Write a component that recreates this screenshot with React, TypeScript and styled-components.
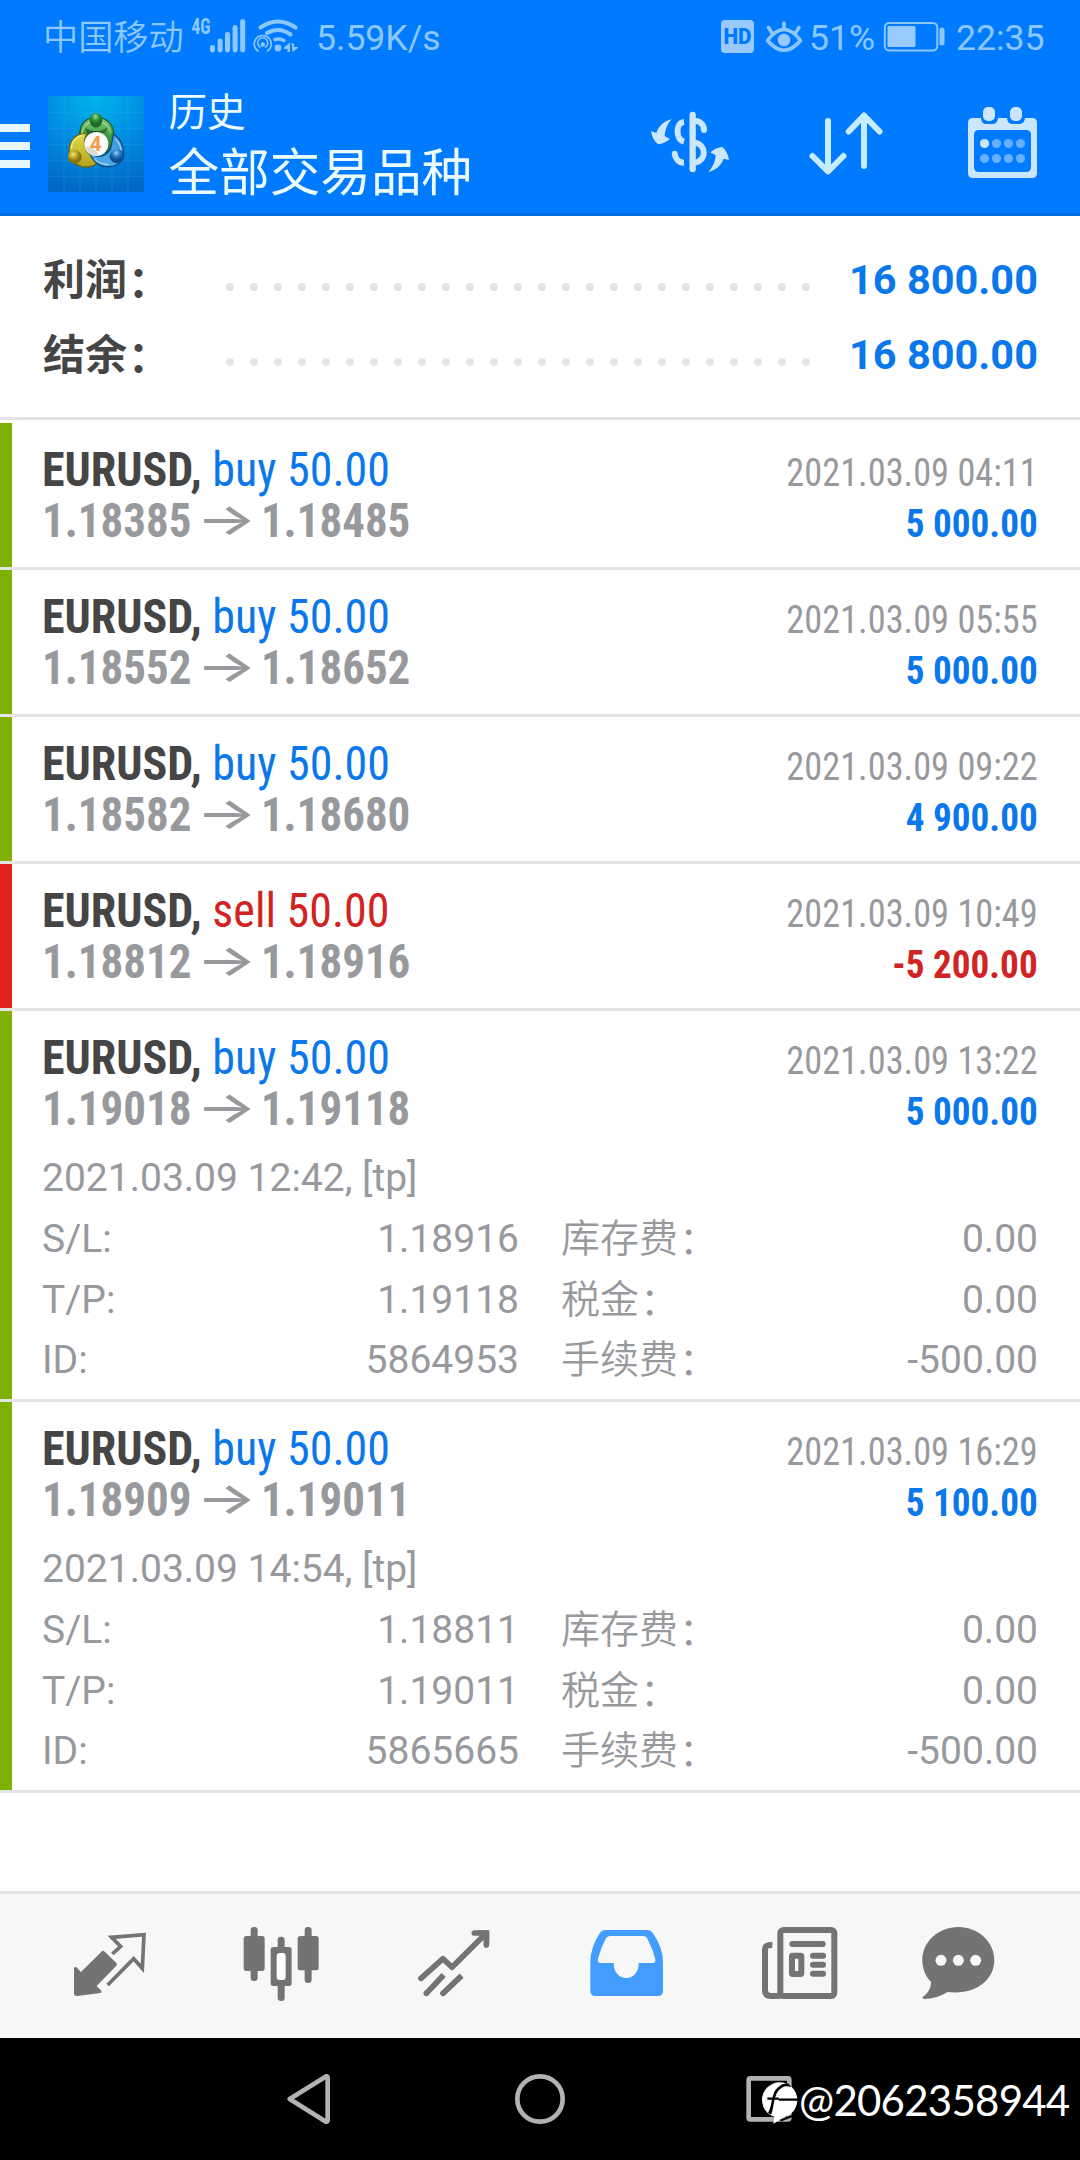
import React from "react";
import styled, { createGlobalStyle } from "styled-components";

const BLUE = "#0a78eb";
const RED = "#d22323";
const GREY = "#98999d";
const sans = `Roboto, "Noto Sans CJK SC", sans-serif`;
const condensed = `"Roboto Condensed", Roboto, "Noto Sans CJK SC", sans-serif`;

const GlobalStyle = createGlobalStyle`
  * { box-sizing: border-box; }
  body { margin: 0; background: #fff; font-family: ${sans}; }
  svg { display: block; flex: none; }
`;

const Screen = styled.div`
  width: 1080px;
  height: 2160px;
  display: flex;
  flex-direction: column;
  overflow: hidden;
  white-space: nowrap;
  background: #fff;
`;

const Header = styled.header`
  height: 216px;
  background: #007aff;
  border-bottom: 3px solid #006ce0;
`;

const StatusBar = styled.div`
  height: 74px;
  padding: 0 36px 0 43px;
  display: flex;
  justify-content: space-between;
  color: #8cc8ff;
  font-size: 35.6px;
  line-height: 76px;
`;

const StatusGroup = styled.div`
  display: flex;
  align-items: flex-start;
`;

const Carrier = styled.span`
  font: 350 35.2px/76px ${sans};
  width: 147px;
`;

const Speed = styled.span`
  margin-left: 16px;
`;

const Battery = styled.span`
  width: 70px;
  text-indent: -1px;
`;

const Clock = styled.span`
  width: 88px;
`;

const AppBar = styled.div`
  height: 139px;
  display: flex;
  align-items: flex-start;
  color: #ecfbff;
`;

const MenuButton = styled.div`
  width: 30px;
  margin: 50px 18px 0 0;
  display: flex;
  flex-direction: column;
  gap: 10px;
`;

const MenuLine = styled.i`
  height: 8px;
  background: #e8f7ff;
`;

const LogoBox = styled.div`
  margin-top: 22px;
`;

const Titles = styled.div`
  flex: 1;
  margin-left: 24.5px;
  font-family: ${sans};
  font-weight: 400;
`;

const Title = styled.div`
  font-size: 38.6px;
  line-height: 58px;
  padding-top: 10px;
`;

const Subtitle = styled.div`
  font-size: 50.6px;
  line-height: 64px;
`;

const Summary = styled.section`
  height: 204px;
  padding: 27px 42px 0;
  border-bottom: 3px solid #e4e4e4;
`;

const SummaryLine = styled.div`
  height: 75px;
  display: flex;
  justify-content: space-between;
  font-size: 42px;
  font-weight: 700;
  line-height: 75px;
`;

const SummaryLabel = styled.span`
  width: 184px;
  padding-left: 1px;
  color: #454545;
`;

const Colon = styled.span`
  display: inline-block;
  margin-left: 1px;
  transform: translateY(2px);
`;

const Dots = styled.div`
  width: 584px;
  display: flex;
  gap: 16px;
  padding-top: 40px;
`;

const Dot = styled.i`
  width: 8px;
  height: 8px;
  border-radius: 50%;
  background: #e4e4e4;
`;

const SummaryValue = styled.span`
  flex: 1;
  font-size: 41.5px;
  line-height: 73px;
  text-align: right;
  color: ${BLUE};
`;

const History = styled.main`
  flex: 1;
  padding-top: 3px;
`;

const Deal = styled.article<{ $bar: string; $tall?: boolean }>`
  height: ${(p) => (p.$tall ? 391 : 147)}px;
  padding: 21px 42px 0;
  border-bottom: 3px solid #e4e4e4;
  box-shadow: inset 12px 0 ${(p) => p.$bar};
`;

const DealHead = styled.div`
  display: flex;
  justify-content: space-between;
  height: 102px;
  font-family: ${condensed};
  line-height: 51px;
`;

const DealMain = styled.div`
  font-size: 48px;
`;

const DealSide = styled.div`
  padding-top: 4px;
  font-size: 39px;
  text-align: right;
`;

const DealTitle = styled.div`
  transform: scaleX(0.958);
  transform-origin: left;
`;

const Symbol = styled.b`
  color: #454545;
`;

const Side = styled.span<{ $sell?: boolean }>`
  color: ${(p) => (p.$sell ? RED : BLUE)};
`;

const Prices = styled.div`
  color: ${GREY};
  font-weight: 700;
  transform: scaleX(0.937);
  transform-origin: left;
`;

const Arrow = styled.span`
  display: inline-block;
  height: 51px;
  margin: 0 5px;
  vertical-align: top;
  font: 500 44px/48px Inter, sans-serif;
  transform: scaleX(1.54);
`;

const CloseTime = styled.div`
  color: ${GREY};
  transform: scaleX(0.932);
  transform-origin: right;
`;

const Profit = styled.div<{ $loss?: boolean }>`
  color: ${(p) => (p.$loss ? RED : BLUE)};
  font-weight: 700;
  transform: scaleX(0.952);
  transform-origin: right;
`;

const Details = styled.div`
  margin-top: 14px;
  display: grid;
  grid-template-columns: 477px 477px;
  column-gap: 42px;
  color: ${GREY};
  font-size: 39px;
  line-height: 60.8px;
`;

const Comment = styled.div`
  grid-column: 1 / -1;
`;

const Field = styled.div`
  display: flex;
  justify-content: space-between;
`;

const FieldLabel = styled.span`
  font-weight: 400;
`;

const CjkLabel = styled(FieldLabel)`
  font-weight: 350;
`;

const TabBar = styled.nav`
  height: 147px;
  padding-left: 24px;
  display: flex;
  background: #f7f7f7;
  border-top: 3px solid #e4e4e4;
`;

const SystemNav = styled.footer`
  position: relative;
  height: 122px;
  padding-left: 195px;
  display: flex;
  background: #000;
`;

const Watermark = styled.div`
  position: absolute;
  left: 762px;
  top: 32px;
  display: flex;
  color: #fff;
  font: 400 42px/60px Lato, sans-serif;
  letter-spacing: -0.75px;
`;

const SignalIcon = () => (
  <svg width="110" height="74" viewBox="190 0 110 74" fill="#8cc8ff">
    <rect x="210" y="45" width="5" height="7.5" rx="2.4" />
    <rect x="217.6" y="38.5" width="5" height="14" rx="2.4" />
    <rect x="225" y="32" width="5" height="20.5" rx="2.4" />
    <rect x="232.6" y="25" width="5" height="27.5" rx="2.4" />
    <rect x="240.2" y="19" width="5" height="33.5" rx="2.4" />
    <text x="191.5" y="34" fontSize="21.5" fontWeight="700" fontFamily="Roboto Condensed, Roboto" textLength="19" lengthAdjust="spacingAndGlyphs">4G</text>
    <g fill="none" stroke="#8cc8ff" strokeLinecap="round">
      <path d="M260.500 27.500 Q278 15.500 295.500 27.500" strokeWidth="4" />
      <path d="M267 33 Q279 26.500 290.500 34.500" strokeWidth="4" />
      <path d="M275 39.500 Q279.500 38 284 40.500" strokeWidth="3.500" />
      <path d="M258 51 A8.500 8.500 0 1 1 267.500 51 M260 47 A5 5 0 1 1 265.500 47" strokeWidth="1.600" />
    </g>
    <circle cx="262.800" cy="44.500" r="2.200" />
    <circle cx="278" cy="48" r="3.400" />
    <path d="M290 42.500 V52 H287.500 V49 H284 V47.500 Z M291.500 43 L294 44 V47 H298 V48 L292.500 52 Z" />
  </svg>
);

const HdEyeIcon = () => (
  <svg width="90" height="74" viewBox="720 0 90 74">
    <rect x="721" y="20" width="33" height="33" rx="4" fill="#99caff" />
    <text x="723.500" y="44" fontSize="21.500" fontWeight="900" fontFamily="Roboto" fill="#007aff" textLength="28" lengthAdjust="spacingAndGlyphs">HD</text>
    <g fill="none" stroke="#8cc8ff" strokeWidth="3.600" strokeLinecap="round">
      <path d="M767.500 40.500 Q784 18.500 800.500 40.500 Q784 60 767.500 40.500 Z" strokeLinejoin="round" />
      <path d="M784 23 V29 M768.500 27.500 L772 33 M799 27.500 L795.500 33" />
    </g>
    <circle cx="784" cy="40" r="6.300" fill="#99caff" />
  </svg>
);

const BatteryIcon = () => (
  <svg width="76" height="74" viewBox="880 0 76 74">
    <rect x="884.800" y="23" width="52.500" height="27.500" rx="4.500" fill="none" stroke="#8cc8ff" strokeWidth="2" />
    <rect x="887.500" y="26" width="28" height="21" rx="1.500" fill="#99caff" />
    <rect x="939.500" y="27.500" width="5" height="18" rx="2.500" fill="#8cc8ff" />
  </svg>
);

const AppLogo = () => (
  <svg width="96" height="96" viewBox="24 18 288 288">
    <defs>
      <radialGradient id="lgBg" cx=".5" cy="0" r="1">
        <stop offset="0" stopColor="#00b4ee" /><stop offset=".55" stopColor="#008be0" /><stop offset="1" stopColor="#0069c4" />
      </radialGradient>
      <linearGradient id="lgGreen" x1="0" y1="0" x2="0" y2="1"><stop offset="0" stopColor="#8fcf80" /><stop offset=".5" stopColor="#3f9c42" /><stop offset="1" stopColor="#247a30" /></linearGradient>
      <linearGradient id="lgYellow" x1="0" y1="0" x2="0" y2="1"><stop offset="0" stopColor="#e3dc46" /><stop offset="1" stopColor="#b3a020" /></linearGradient>
      <linearGradient id="lgBlue" x1="0" y1="0" x2="0" y2="1"><stop offset="0" stopColor="#3a98dc" /><stop offset="1" stopColor="#4ea9e8" /></linearGradient>
      <radialGradient id="hdGreen" cx=".45" cy=".25"><stop offset="0" stopColor="#a7d89b" /><stop offset=".5" stopColor="#3b9a3d" /><stop offset="1" stopColor="#1d6b28" /></radialGradient>
      <radialGradient id="hdYellow" cx=".4" cy=".3"><stop offset="0" stopColor="#f0e68a" /><stop offset=".5" stopColor="#c0ae2b" /><stop offset="1" stopColor="#857510" /></radialGradient>
      <radialGradient id="hdBlue" cx=".45" cy=".25"><stop offset="0" stopColor="#9fd2f5" /><stop offset=".5" stopColor="#2a7fc8" /><stop offset="1" stopColor="#0b4f94" /></radialGradient>
    </defs>
    <rect x="24" y="18" width="288" height="288" fill="url(#lgBg)" />
    <path d="M72 18V306M120 18V306M168 18V306M216 18V306M264 18V306M24 68H312M24 116H312M24 164H312M24 212H312M24 260H312" stroke="#3fb4f0" strokeOpacity=".22" strokeWidth="3" />
    <g strokeLinejoin="round" strokeWidth="4">
      <path d="M119 136 C119 100 140 82 168 82 C202 82 223 106 221 138 C220 164 208 178 196 188 L190 146 C184 120 150 118 138 140 Z" fill="url(#lgGreen)" stroke="#1f5c28" />
      <path d="M88 196 C82 154 106 128 142 130 C128 146 132 178 148 192 C164 200 176 196 178 210 C170 226 148 234 126 230 C108 226 94 214 88 196 Z" fill="url(#lgYellow)" stroke="#6e6612" />
      <path d="M220 132 C242 146 252 168 250 196 C246 222 222 232 196 230 C172 226 154 208 150 190 C172 206 198 200 212 176 Z" fill="url(#lgBlue)" stroke="#0f4c88" />
      <path d="M126 132 C128 108 146 94 168 94 C192 94 208 108 211 130" fill="none" stroke="#b7e3ac" strokeOpacity=".7" />
      <path d="M94 176 C94 156 108 140 128 136" fill="none" stroke="#f7f3a0" strokeOpacity=".8" />
      <path d="M226 146 C238 158 243 168 243 180 M164 208 C176 220 190 224 206 223" fill="none" stroke="#b4dcf7" strokeOpacity=".8" />
    </g>
    <path d="M133 112 Q168 136 203 112 L196 128 H140 Z" fill="#143f1c" opacity=".55" />
    <ellipse cx="168" cy="91" rx="19" ry="22" fill="url(#hdGreen)" />
    <ellipse cx="104" cy="201" rx="21" ry="20" fill="url(#hdYellow)" />
    <ellipse cx="231" cy="199" rx="22" ry="21" fill="url(#hdBlue)" />
    <circle cx="169" cy="162" r="36" fill="#fafafa" />
    <path d="M135 170 Q160 166 176 197 Q146 200 135 170Z" fill="#d9dadb" />
    <text x="167" y="182" textAnchor="middle" fontFamily="Roboto" fontSize="62" fontWeight="700" fill="#f79a4b">4</text>
  </svg>
);

const HeaderIcons = () => (
  <svg width="440" height="139" viewBox="640 74 440 139" fill="none" stroke="#cbe6ff" strokeLinecap="round" strokeLinejoin="round">
    <g transform="translate(640 100) scale(.33333)">
      <path d="M158 45 V207" strokeWidth="19" />
      <path d="M132 66 C106 68 106 118 132 125 M104 161 C106 176 116 188 132 188" strokeWidth="18" strokeLinecap="butt" />
      <circle cx="104" cy="161" r="8.500" fill="#cbe6ff" stroke="none" />
      <path d="M166 63 C182 64 192 75 192 90 M166 128 C200 136 200 180 166 188" strokeWidth="18" />
      <path d="M95 57 C72 63 56 78 49 98 L33 94 C36 112 43 124 54 133 C66 131 78 127 90 117 L74 108 C76 88 82 72 95 57 Z M205 216 C228 210 244 196 251 176 L267 180 C265 164 258 150 247 141 C234 142 222 147 211 157 L227 166 C225 186 219 202 205 216 Z" fill="#cbe6ff" stroke="none" />
    </g>
    <path d="M828 121 V171 M812.500 156 L828 171.500 L843.500 156 M864 166 V116 M848.700 131.500 L864 115.500 L879.500 131.500" strokeWidth="6" stroke="#c6ecff" />
    <g stroke="none" fill="#cbe6ff">
      <path fillRule="evenodd" d="M973 118 H981 C982 125 985 124 989 124 C993 124 997 125 998 118 H1007 C1008 125 1011 124 1016 124 C1020 124 1024 125 1025 118 H1032 Q1037 118 1037 123 V173 Q1037 178 1032 178 H973 Q968 178 968 173 V123 Q968 118 973 118 Z M979 130 Q974 130 974 135 V167 Q974 172 979 172 H1026 Q1031 172 1031 167 V135 Q1031 130 1026 130 Z" />
      <rect x="983" y="107" width="12" height="14" rx="5" />
      <rect x="1010" y="107" width="12" height="14" rx="5" />
      <circle cx="984.500" cy="143.500" r="4.600" />
      <g fill="#66afff">
        <circle cx="996.500" cy="143.500" r="4.600" /><circle cx="1008.500" cy="143.500" r="4.600" /><circle cx="1020.500" cy="143.500" r="4.600" />
        <circle cx="984.500" cy="158.500" r="4.600" /><circle cx="996.500" cy="158.500" r="4.600" /><circle cx="1008.500" cy="158.500" r="4.600" /><circle cx="1020.500" cy="158.500" r="4.600" />
      </g>
    </g>
  </svg>
);

const TabIcon = ({ x, children }: { x: number; children: React.ReactNode }) => (
  <svg width="172.333" height="144" viewBox={`${x} 42 517 432`} fill="#737373">{children}</svg>
);

const NavIcon = ({ x, children }: { x: number; children: React.ReactNode }) => (
  <svg width="230" height="122" viewBox={`${x} 474 690 366`} fill="none" stroke="#b2b2b2" strokeWidth="14" strokeLinejoin="round">{children}</svg>
);

type DealData = {
  open: string; close: string; time: string; profit: string; sell?: boolean;
  info?: { comment: string; sl: string; tp: string; id: string };
};

const deals: DealData[] = [
  { open: "1.18385", close: "1.18485", time: "2021.03.09 04:11", profit: "5 000.00" },
  { open: "1.18552", close: "1.18652", time: "2021.03.09 05:55", profit: "5 000.00" },
  { open: "1.18582", close: "1.18680", time: "2021.03.09 09:22", profit: "4 900.00" },
  { open: "1.18812", close: "1.18916", time: "2021.03.09 10:49", profit: "-5 200.00", sell: true },
  { open: "1.19018", close: "1.19118", time: "2021.03.09 13:22", profit: "5 000.00",
    info: { comment: "2021.03.09 12:42, [tp]", sl: "1.18916", tp: "1.19118", id: "5864953" } },
  { open: "1.18909", close: "1.19011", time: "2021.03.09 16:29", profit: "5 100.00",
    info: { comment: "2021.03.09 14:54, [tp]", sl: "1.18811", tp: "1.19011", id: "5865665" } },
];

const CjkField = ({ label, value }: { label: string; value: string }) => (
  <Field><CjkLabel>{label}<Colon>：</Colon></CjkLabel><span>{value}</span></Field>
);

const DealRow = ({ deal }: { deal: DealData }) => (
  <Deal $bar={deal.sell ? "#e32020" : "#7fb000"} $tall={!!deal.info}>
    <DealHead>
      <DealMain>
        <DealTitle><Symbol>EURUSD,</Symbol> <Side $sell={deal.sell}>{deal.sell ? "sell" : "buy"} 50.00</Side></DealTitle>
        <Prices>{deal.open} <Arrow>→</Arrow> {deal.close}</Prices>
      </DealMain>
      <DealSide>
        <CloseTime>{deal.time}</CloseTime>
        <Profit $loss={deal.sell}>{deal.profit}</Profit>
      </DealSide>
    </DealHead>
    {deal.info && (
      <Details>
        <Comment>{deal.info.comment}</Comment>
        <Field><FieldLabel>S/L:</FieldLabel><span>{deal.info.sl}</span></Field>
        <CjkField label="库存费" value="0.00" />
        <Field><FieldLabel>T/P:</FieldLabel><span>{deal.info.tp}</span></Field>
        <CjkField label="税金" value="0.00" />
        <Field><FieldLabel>ID:</FieldLabel><span>{deal.info.id}</span></Field>
        <CjkField label="手续费" value="-500.00" />
      </Details>
    )}
  </Deal>
);

const SummaryRow = ({ label, value }: { label: string; value: string }) => (
  <SummaryLine>
    <SummaryLabel>{label}<Colon>：</Colon></SummaryLabel>
    <Dots>{Array.from({ length: 25 }, (_, i) => <Dot key={i} />)}</Dots>
    <SummaryValue>{value}</SummaryValue>
  </SummaryLine>
);

export default function App() {
  return (
    <Screen>
      <GlobalStyle />
      <Header>
        <StatusBar>
          <StatusGroup>
            <Carrier>中国移动</Carrier>
            <SignalIcon />
            <Speed>5.59K/s</Speed>
          </StatusGroup>
          <StatusGroup>
            <HdEyeIcon />
            <Battery>51%</Battery>
            <BatteryIcon />
            <Clock>22:35</Clock>
          </StatusGroup>
        </StatusBar>
        <AppBar>
          <MenuButton><MenuLine /><MenuLine /><MenuLine /></MenuButton>
          <LogoBox><AppLogo /></LogoBox>
          <Titles>
            <Title>历史</Title>
            <Subtitle>全部交易品种</Subtitle>
          </Titles>
          <HeaderIcons />
        </AppBar>
      </Header>
      <Summary>
        <SummaryRow label="利润" value="16 800.00" />
        <SummaryRow label="结余" value="16 800.00" />
      </Summary>
      <History>
        {deals.map((d) => <DealRow key={d.time} deal={d} />)}
      </History>
      <TabBar>
        <TabIcon x={72}>
          <path d="M222 264 Q224 259 229 262 L243 276 L304 215 Q309 210 314 215 L350 250 Q352 254 349 257 L290 318 L304 332 Q306 337 301 339 L232 348 Q222 349 222 340 Z" />
          <path d="M337 222 L362 199 L335 172 L432 164 L427 265 L401 236 L323 315" fill="none" stroke="#737373" strokeWidth="11" />
          <circle cx="335" cy="173" r="5.500" /><circle cx="426" cy="264" r="5.500" />
        </TabIcon>
        <TabIcon x={589}>
          <rect x="753" y="141" width="21" height="162" rx="10" /><rect x="732" y="168" width="63" height="105" rx="8" />
          <rect x="915" y="141" width="21" height="168" rx="10" /><rect x="894" y="168" width="63" height="103" rx="8" />
          <rect x="834" y="170" width="21" height="193" rx="10" /><rect x="813" y="201" width="63" height="117" rx="8" />
          <rect x="831" y="219" width="27" height="81" rx="9" fill="#fff" />
        </TabIcon>
        <TabIcon x={26}>
          <g fill="none" stroke="#737373" strokeWidth="17" strokeLinecap="round" strokeLinejoin="round">
            <path d="M182 295 L248 236 L275 262 L375 162 M342 159 H378 V195" />
          </g>
          <path d="M250 285 L198 340 M304 287 L248 340" stroke="#737373" strokeWidth="17" />
          <circle cx="198" cy="340" r="8.500" /><circle cx="248" cy="340" r="8.500" />
          <path d="M352 151 H387 V190 Z" />
        </TabIcon>
        <TabIcon x={543}>
          <path fillRule="evenodd" fill="#439cff" d="M736 150 H862 Q872 150 878 158 Q909 202 909 246 V332 Q909 348 893 348 H707 Q691 348 691 332 V246 Q691 202 720 158 Q726 150 736 150 Z M752 168 Q741 168 737 176 Q722 205 714 236 Q712 249 722 249 H761 C761 278 778 294 799 294 C820 294 836 278 836 249 H878 Q888 249 886 238 Q879 210 863 178 Q859 168 848 168 Z" />
        </TabIcon>
        <TabIcon x={-20}>
          <g fill="none" stroke="#737373">
            <rect x="182" y="150" width="162" height="198" rx="10" strokeWidth="18" />
            <path d="M158 195 Q136 194 136 208 V330 Q136 348 154 348 H182" strokeWidth="18" />
            <rect x="217" y="227" width="28" height="55" rx="2" strokeWidth="18" />
            <path d="M218 192 H309 M280 227.500 H310 M280 254.500 H310 M280 281.500 H310" strokeWidth="18" strokeLinecap="round" />
          </g>
        </TabIcon>
        <TabIcon x={497}>
          <path d="M714 141 C774 141 822 186 822 240 C822 300 766 346 682 336 C660 350 635 357 611 357 Q604 354 608 350 C624 338 632 324 632 305 C616 290 606 266 606 240 C606 186 654 141 714 141 Z" />
          <g fill="#f7f7f7"><circle cx="662" cy="241" r="16.500" /><circle cx="714" cy="241" r="16.500" /><circle cx="766" cy="241" r="16.500" /></g>
        </TabIcon>
      </TabBar>
      <SystemNav>
        <NavIcon x={585}><path d="M869 657 L979 589 Q983 588 983 594 V720 Q983 726 978 725 Z" /></NavIcon>
        <NavIcon x={195}><circle cx="540" cy="657" r="68" /></NavIcon>
        <NavIcon x={-195}><rect x="86" y="595" width="122" height="123" rx="5" /></NavIcon>
        <Watermark>
          <svg width="37" height="58" viewBox="126 570 111 174">
            <circle cx="179" cy="660" r="53" fill="#fff" />
            <path d="M160 732 L166 694 L204 704 Q176 720 160 732 Z" fill="#fff" />
            <path d="M153 704 C161 694 160 652 174 634 C184 620 198 614 214 622 L206 611 C190 608 172 618 162 638 C154 656 154 684 144 698 Z" fill="#000" />
            <path d="M142 656 H176 M176 659 H234" fill="none" stroke="#000" strokeWidth="7" />
            <path d="M181 722 Q202 714 216 708" fill="none" stroke="#000" strokeWidth="6" />
          </svg>
          @2062358944
        </Watermark>
      </SystemNav>
    </Screen>
  );
}
